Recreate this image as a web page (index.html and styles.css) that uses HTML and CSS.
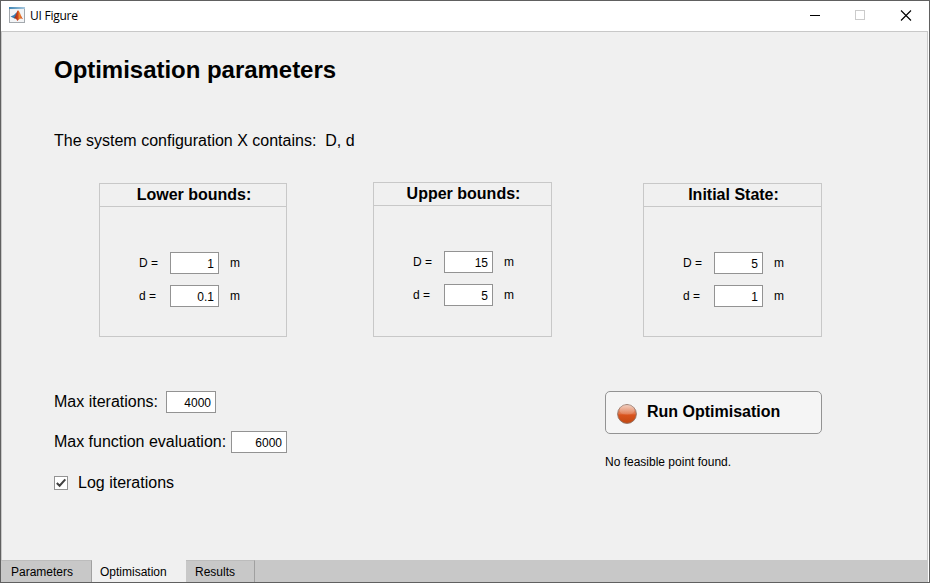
FILE: index.html
```html
<!DOCTYPE html>
<html lang="en">
<head>
<meta charset="utf-8">
<title>UI Figure</title>
<link rel="stylesheet" href="styles.css">
</head>
<body>
<div class="window">
  <header class="titlebar">
    <svg class="app-icon" width="16" height="16" viewBox="0 0 16 16">
      <defs>
        <linearGradient id="bar" x1="0" x2="1"><stop offset="0" stop-color="#3f86b5"/><stop offset="1" stop-color="#a9c9de"/></linearGradient>
        <linearGradient id="peak" x1="0" x2="1"><stop offset="0" stop-color="#7d2a1d"/><stop offset=".4" stop-color="#c9401c"/><stop offset=".6" stop-color="#f0882e"/><stop offset="1" stop-color="#c4391a"/></linearGradient>
      </defs>
      <rect x=".5" y=".5" width="15" height="15" fill="#f2f4f6" stroke="#a3a8ad"/>
      <rect x="0" y="0" width="16" height="2" fill="url(#bar)"/>
      <path d="M1.500 9.600 5 8 7.600 5.200 8.400 8.300 5.800 11.600 4.400 11Z" fill="#3a7fb4"/>
      <path d="M4.800 11C7 9.800 7.600 3.800 9 3.200C10.800 4 11.600 9 14.200 12.200C12.400 11 11.200 11.200 10 12.600L8.200 14C7.700 12.300 6.800 11.400 4.800 11Z" fill="url(#peak)"/>
    </svg>
    <span class="window-title">UI Figure</span>
    <svg class="controls" width="104" height="14" viewBox="0 0 104 14">
      <path d="M1 7.5h10" stroke="#000"/>
      <rect x="46.500" y="2.500" width="9" height="9" fill="none" stroke="#cbcbcb"/>
      <path d="M92 2.500 102 12.500M102 2.500 92 12.500" stroke="#000" stroke-width="1.100" fill="none"/>
    </svg>
  </header>
  <main class="page">
    <h1>Optimisation parameters</h1>
    <p class="summary">The system configuration X contains: &nbsp;D, d</p>
    <div class="panels">
      <section class="panel lower">
        <h2>Lower bounds:</h2>
        <div class="fields">
          <label>D =</label><span class="field">1</span><span>m</span>
          <label>d =</label><span class="field">0.1</span><span>m</span>
        </div>
      </section>
      <section class="panel upper">
        <h2>Upper bounds:</h2>
        <div class="fields">
          <label>D =</label><span class="field">15</span><span>m</span>
          <label>d =</label><span class="field">5</span><span>m</span>
        </div>
      </section>
      <section class="panel initial">
        <h2>Initial State:</h2>
        <div class="fields">
          <label>D =</label><span class="field">5</span><span>m</span>
          <label>d =</label><span class="field">1</span><span>m</span>
        </div>
      </section>
    </div>
    <div class="bottom">
      <div class="options">
        <div class="option"><label class="iter-label">Max iterations:</label><span class="field iter">4000</span></div>
        <div class="option"><label class="eval-label">Max function evaluation:</label><span class="field eval">6000</span></div>
        <div class="option check">
          <svg width="14" height="14" viewBox="0 0 14 14"><rect x=".5" y=".5" width="13" height="13" fill="#fff" stroke="#939393"/><path d="M2.800 7 5.600 9.700 11.300 3.300" fill="none" stroke="#404040" stroke-width="2"/></svg>
          <label class="log-label">Log iterations</label>
        </div>
      </div>
      <div class="actions">
        <button class="run" type="button">
          <svg width="20" height="20" viewBox="0 0 20 20">
            <defs>
              <linearGradient id="ball" x1="0" y1="0" x2="0" y2="1"><stop offset="0" stop-color="#e59a7c"/><stop offset=".48" stop-color="#e07448"/><stop offset=".55" stop-color="#d9541e"/><stop offset="1" stop-color="#c24812"/></linearGradient>
              <linearGradient id="shine" x1="0" y1="0" x2="0" y2="1"><stop offset="0" stop-color="#fff" stop-opacity=".5"/><stop offset="1" stop-color="#fff" stop-opacity=".05"/></linearGradient>
            </defs>
            <circle cx="10" cy="10" r="9.400" fill="url(#ball)" stroke="#8f7468" stroke-width=".9"/>
            <ellipse cx="10" cy="6" rx="7.600" ry="5" fill="url(#shine)"/>
          </svg>
          <span>Run Optimisation</span>
        </button>
        <p class="status">No feasible point found.</p>
      </div>
    </div>
  </main>
  <nav class="tabs">
    <span class="tab first">Parameters</span>
    <span class="tab active">Optimisation</span>
    <span class="tab last">Results</span>
  </nav>
</div>
</body>
</html>
```
FILE: styles.css
```css
* { box-sizing: border-box; }
body { margin: 0; font: 12px/22px "Liberation Sans", Arial, sans-serif; color: #000; }
h1, h2, p { margin: 0; }
.window {
  width: 930px; height: 583px; overflow: hidden;
  display: flex; flex-direction: column;
  border: 1px solid #606060; background: #fff;
}
.titlebar { flex: none; height: 30px; display: flex; align-items: center; padding: 0 16px 0 8px; }
.app-icon { margin-bottom: 2px; }
.window-title { font: 12px/22px "Open Sans", "Noto Sans", sans-serif; letter-spacing: -0.25px; margin: 0 auto 0 5px; }
.controls { margin-bottom: 2px; }
.page {
  flex: 1; margin-right: 1px; padding: 24px 0 0 52px;
  border: 1px solid #c8c8c8; border-bottom: 0; background: #f0f0f0;
}
h1 { font-size: 24px; line-height: 28px; letter-spacing: -0.03px; white-space: nowrap; }
.summary { font-size: 16px; line-height: 20px; margin-top: 47px; white-space: nowrap; }
.panels { display: flex; align-items: flex-end; height: 155px; margin: 31px 0 0 45px; }
.panel { border: 1px solid #c8c8c8; width: 179px; height: 154px; }
.panel h2 { height: 23px; padding-left: 2px; font-size: 16px; line-height: 22px; text-align: center; border-bottom: 1px solid #c8c8c8; }
.panel.lower { width: 188px; }
.panel.upper { height: 155px; margin: 0 91px 0 86px; }
.fields { display: grid; grid-template-columns: 31px 49px auto; row-gap: 11px; padding: 45px 0 0 39px; }
.fields > span:not(.field) { padding-left: 11px; }
.field { height: 22px; border: 1px solid #939393; background: #fff; text-align: right; padding-right: 4px; line-height: 22px; }
.bottom { display: flex; margin-top: 54px; }
.options { width: 551px; display: flex; flex-direction: column; gap: 18px; font-size: 16px; }
.option { display: flex; white-space: nowrap; }
.option .field { font-size: 12px; }
.iter-label { width: 112px; }
.eval-label { width: 177px; letter-spacing: -0.02px; }
.iter { width: 50px; }
.eval { width: 56px; }
.check { gap: 10px; padding-top: 1px; }
.check svg { margin-top: 4px; }
.run {
  display: flex; align-items: flex-start; gap: 10px; width: 217px; height: 43px;
  padding: 0 0 0 11px; border: 1px solid #939393; border-radius: 5px;
  background: #f5f5f5; color: #000; font: bold 16px/20px "Liberation Sans", Arial, sans-serif;
}
.run svg { margin-top: 12px; }
.run span { margin-top: 10px; white-space: nowrap; }
.status { margin-top: 17px; white-space: nowrap; }
.tabs { flex: none; display: flex; height: 22px; margin: 0 1px 0 0; background: #c8c8c8; line-height: 21px; }
.tab { padding-top: 1px; border-right: 1px solid #a0a0a0; border-top: 1px solid #bcbcbc; }
.tab.first { width: 91px; padding-left: 10px; }
.tab.active { width: 94px; padding-left: 8px; background: #f0f0f0; border-color: #f0f0f0; }
.tab.last { width: 69px; padding-left: 9px; }
```
